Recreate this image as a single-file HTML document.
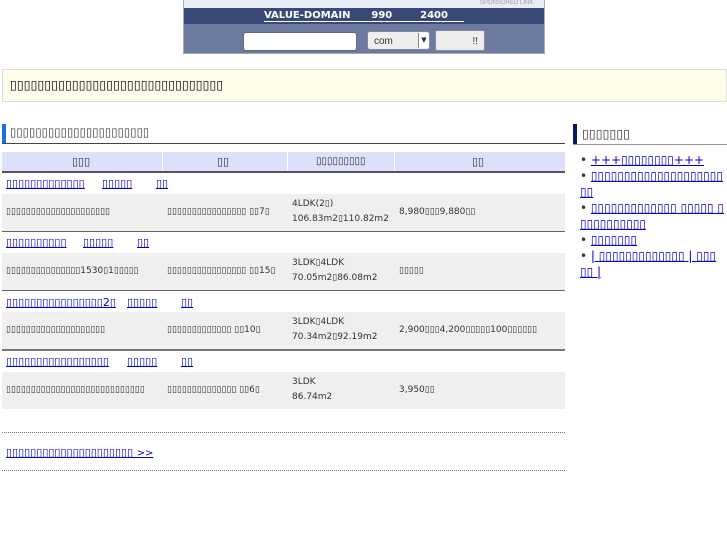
<!DOCTYPE html>
<html><head><meta charset="utf-8"><style>
*{margin:0;padding:0;box-sizing:border-box}
body{width:727px;height:545px;background:#fff;font-family:"DejaVu Sans","Liberation Sans",sans-serif;position:relative;overflow:hidden;color:#333}
.a{position:absolute}
a{color:#00c;text-decoration:underline}
.s{font-size:9px;white-space:nowrap}
.l{font-size:11px;white-space:nowrap}
.g{background:#efefef}
</style></head><body>
<div class="a" style="left:183px;top:0;width:362px;height:54px;background:#6d7aa0;border:1px solid #aab"></div>
<div class="a" style="left:184px;top:0;width:360px;height:8px;background:#e8ecf4"></div>
<div class="a" style="left:480px;top:0;font-size:6px;color:#99a;font-family:'Liberation Sans',sans-serif">SPONSORED LINK</div>
<div class="a" style="left:184px;top:8px;width:360px;height:16px;background:#3a4a78"></div>
<div class="a" style="left:264px;top:10px;font:bold 10px 'DejaVu Sans',sans-serif;color:#fff;border-bottom:1px solid #fff;width:200px;white-space:pre">VALUE-DOMAIN      990        2400</div>
<div class="a" style="left:243px;top:32px;width:114px;height:19px;background:#fff;border:1px solid #667;border-radius:3px"></div>
<div class="a" style="left:367px;top:31px;width:63px;height:19px;background:#eee;border:1px solid #889;border-radius:3px;font:10px 'Liberation Sans',sans-serif;padding:4px 6px">com</div>
<div class="a" style="left:418px;top:33px;width:11px;height:15px;background:#fff;border-left:1px solid #889;font-size:7px;text-align:center;line-height:15px">▼</div>
<div class="a" style="left:435px;top:30px;width:50px;height:21px;background:#eee;border:1px solid #889;border-radius:2px;font:10px 'Liberation Sans',sans-serif;text-align:right;padding:5px 6px">!!</div>

<div class="a" style="left:2px;top:69px;width:725px;height:33px;background:#fffdea;border:1px solid #ddd"></div>
<div class="a" style="left:10px;top:77px;font-size:12.5px;white-space:nowrap;color:#000">▯▯▯▯▯▯▯▯▯▯▯▯▯▯▯▯▯▯▯▯▯▯▯▯▯▯▯▯▯▯▯</div>

<div class="a" style="left:2px;top:124px;width:4px;height:19px;background:#1a6ee8"></div>
<div class="a" style="left:2px;top:143px;width:563px;height:1px;background:#444"></div>
<div class="a" style="left:10px;top:125px;font-size:11.5px;white-space:nowrap">▯▯▯▯▯▯▯▯▯▯▯▯▯▯▯▯▯▯▯▯▯▯</div>

<div class="a" style="left:2px;top:152px;width:563px;height:20px;background:#dde0fa"></div>
<div class="a" style="left:162px;top:152px;width:1px;height:20px;background:#fff"></div>
<div class="a" style="left:287px;top:152px;width:1px;height:20px;background:#fff"></div>
<div class="a" style="left:394px;top:152px;width:1px;height:20px;background:#fff"></div>
<div class="a" style="left:2px;top:171px;width:563px;height:2px;background:#555"></div>
<div class="a s" style="left:72px;top:155px;font-size:11px">▯▯▯</div>
<div class="a s" style="left:217px;top:155px;font-size:11px">▯▯</div>
<div class="a s" style="left:316px;top:156px;font-size:10px">▯▯▯▯▯▯▯▯▯</div>
<div class="a s" style="left:472px;top:155px;font-size:11px">▯▯</div>

<a class="a l" style="left:6px;top:177px">▯▯▯▯▯▯▯▯▯▯▯▯▯</a><a class="a l" style="left:102px;top:177px">▯▯▯▯▯</a><a class="a l" style="left:156px;top:177px">▯▯</a>
<div class="a g" style="left:2px;top:194px;width:563px;height:37px"></div>
<div class="a s" style="left:6px;top:207px">▯▯▯▯▯▯▯▯▯▯▯▯▯▯▯▯▯▯▯▯▯</div>
<div class="a s" style="left:167px;top:207px">▯▯▯▯▯▯▯▯▯▯▯▯▯▯▯▯ ▯▯7▯</div>
<div class="a s" style="left:292px;top:199px">4LDK(2▯)</div><div class="a s" style="left:292px;top:214px">106.83m2▯110.82m2</div>
<div class="a s" style="left:399px;top:207px">8,980▯▯▯9,880▯▯</div>
<div class="a" style="left:2px;top:231px;width:563px;height:1px;background:#666"></div>

<a class="a l" style="left:6px;top:236px">▯▯▯▯▯▯▯▯▯▯</a><a class="a l" style="left:83px;top:236px">▯▯▯▯▯</a><a class="a l" style="left:137px;top:236px">▯▯</a>
<div class="a g" style="left:2px;top:253px;width:563px;height:37px"></div>
<div class="a s" style="left:6px;top:266px">▯▯▯▯▯▯▯▯▯▯▯▯▯▯▯1530▯1▯▯▯▯▯</div>
<div class="a s" style="left:167px;top:266px">▯▯▯▯▯▯▯▯▯▯▯▯▯▯▯▯ ▯▯15▯</div>
<div class="a s" style="left:292px;top:258px">3LDK▯4LDK</div><div class="a s" style="left:292px;top:273px">70.05m2▯86.08m2</div>
<div class="a s" style="left:399px;top:266px">▯▯▯▯▯</div>
<div class="a" style="left:2px;top:290px;width:563px;height:1px;background:#666"></div>

<a class="a l" style="left:6px;top:296px">▯▯▯▯▯▯▯▯▯▯▯▯▯▯▯▯2▯</a><a class="a l" style="left:127px;top:296px">▯▯▯▯▯</a><a class="a l" style="left:181px;top:296px">▯▯</a>
<div class="a g" style="left:2px;top:312px;width:563px;height:37px"></div>
<div class="a s" style="left:6px;top:325px">▯▯▯▯▯▯▯▯▯▯▯▯▯▯▯▯▯▯▯▯</div>
<div class="a s" style="left:167px;top:325px">▯▯▯▯▯▯▯▯▯▯▯▯▯ ▯▯10▯</div>
<div class="a s" style="left:292px;top:317px">3LDK▯4LDK</div><div class="a s" style="left:292px;top:332px">70.34m2▯92.19m2</div>
<div class="a s" style="left:399px;top:325px">2,900▯▯▯4,200▯▯▯▯▯100▯▯▯▯▯▯</div>
<div class="a" style="left:2px;top:349px;width:563px;height:2px;background:#777"></div>

<a class="a l" style="left:6px;top:355px">▯▯▯▯▯▯▯▯▯▯▯▯▯▯▯▯▯</a><a class="a l" style="left:127px;top:355px">▯▯▯▯▯</a><a class="a l" style="left:181px;top:355px">▯▯</a>
<div class="a g" style="left:2px;top:372px;width:563px;height:37px"></div>
<div class="a s" style="left:6px;top:385px">▯▯▯▯▯▯▯▯▯▯▯▯▯▯▯▯▯▯▯▯▯▯▯▯▯▯▯▯</div>
<div class="a s" style="left:167px;top:385px">▯▯▯▯▯▯▯▯▯▯▯▯▯▯ ▯▯6▯</div>
<div class="a s" style="left:292px;top:377px">3LDK</div><div class="a s" style="left:292px;top:392px">86.74m2</div>
<div class="a s" style="left:399px;top:385px">3,950▯▯</div>

<div class="a" style="left:2px;top:432px;width:563px;border-top:1px dotted #777"></div>
<a class="a l" style="left:6px;top:446px">▯▯▯▯▯▯▯▯▯▯▯▯▯▯▯▯▯▯▯▯▯ <span style="font-size:10px">&gt;&gt;</span></a>
<div class="a" style="left:2px;top:470px;width:563px;border-top:1px dotted #777"></div>

<div class="a" style="left:573px;top:124px;width:4px;height:20px;background:#0a1a60"></div>
<div class="a" style="left:573px;top:144px;width:154px;height:1px;background:#999"></div>
<div class="a" style="left:582px;top:126px;font-size:12.5px;white-space:nowrap">▯▯▯▯▯▯▯</div>
<ul class="a" style="left:580px;top:152px;width:146px;font-size:12px;line-height:16px;list-style:none;word-break:break-all">
<li>• <a>+++▯▯▯▯▯▯▯▯+++</a></li>
<li>• <a>▯▯▯▯▯▯▯▯▯▯▯▯▯▯▯▯▯▯▯▯▯▯</a></li>
<li>• <a>▯▯▯▯▯▯▯▯▯▯▯▯▯ ▯▯▯▯▯ ▯▯▯▯▯▯▯▯▯▯▯</a></li>
<li>• <a>▯▯▯▯▯▯▯</a></li>
<li>• <a>| ▯▯▯▯▯▯▯▯▯▯▯▯▯ | ▯▯▯ ▯▯ |</a></li>
</ul>
</body></html>
